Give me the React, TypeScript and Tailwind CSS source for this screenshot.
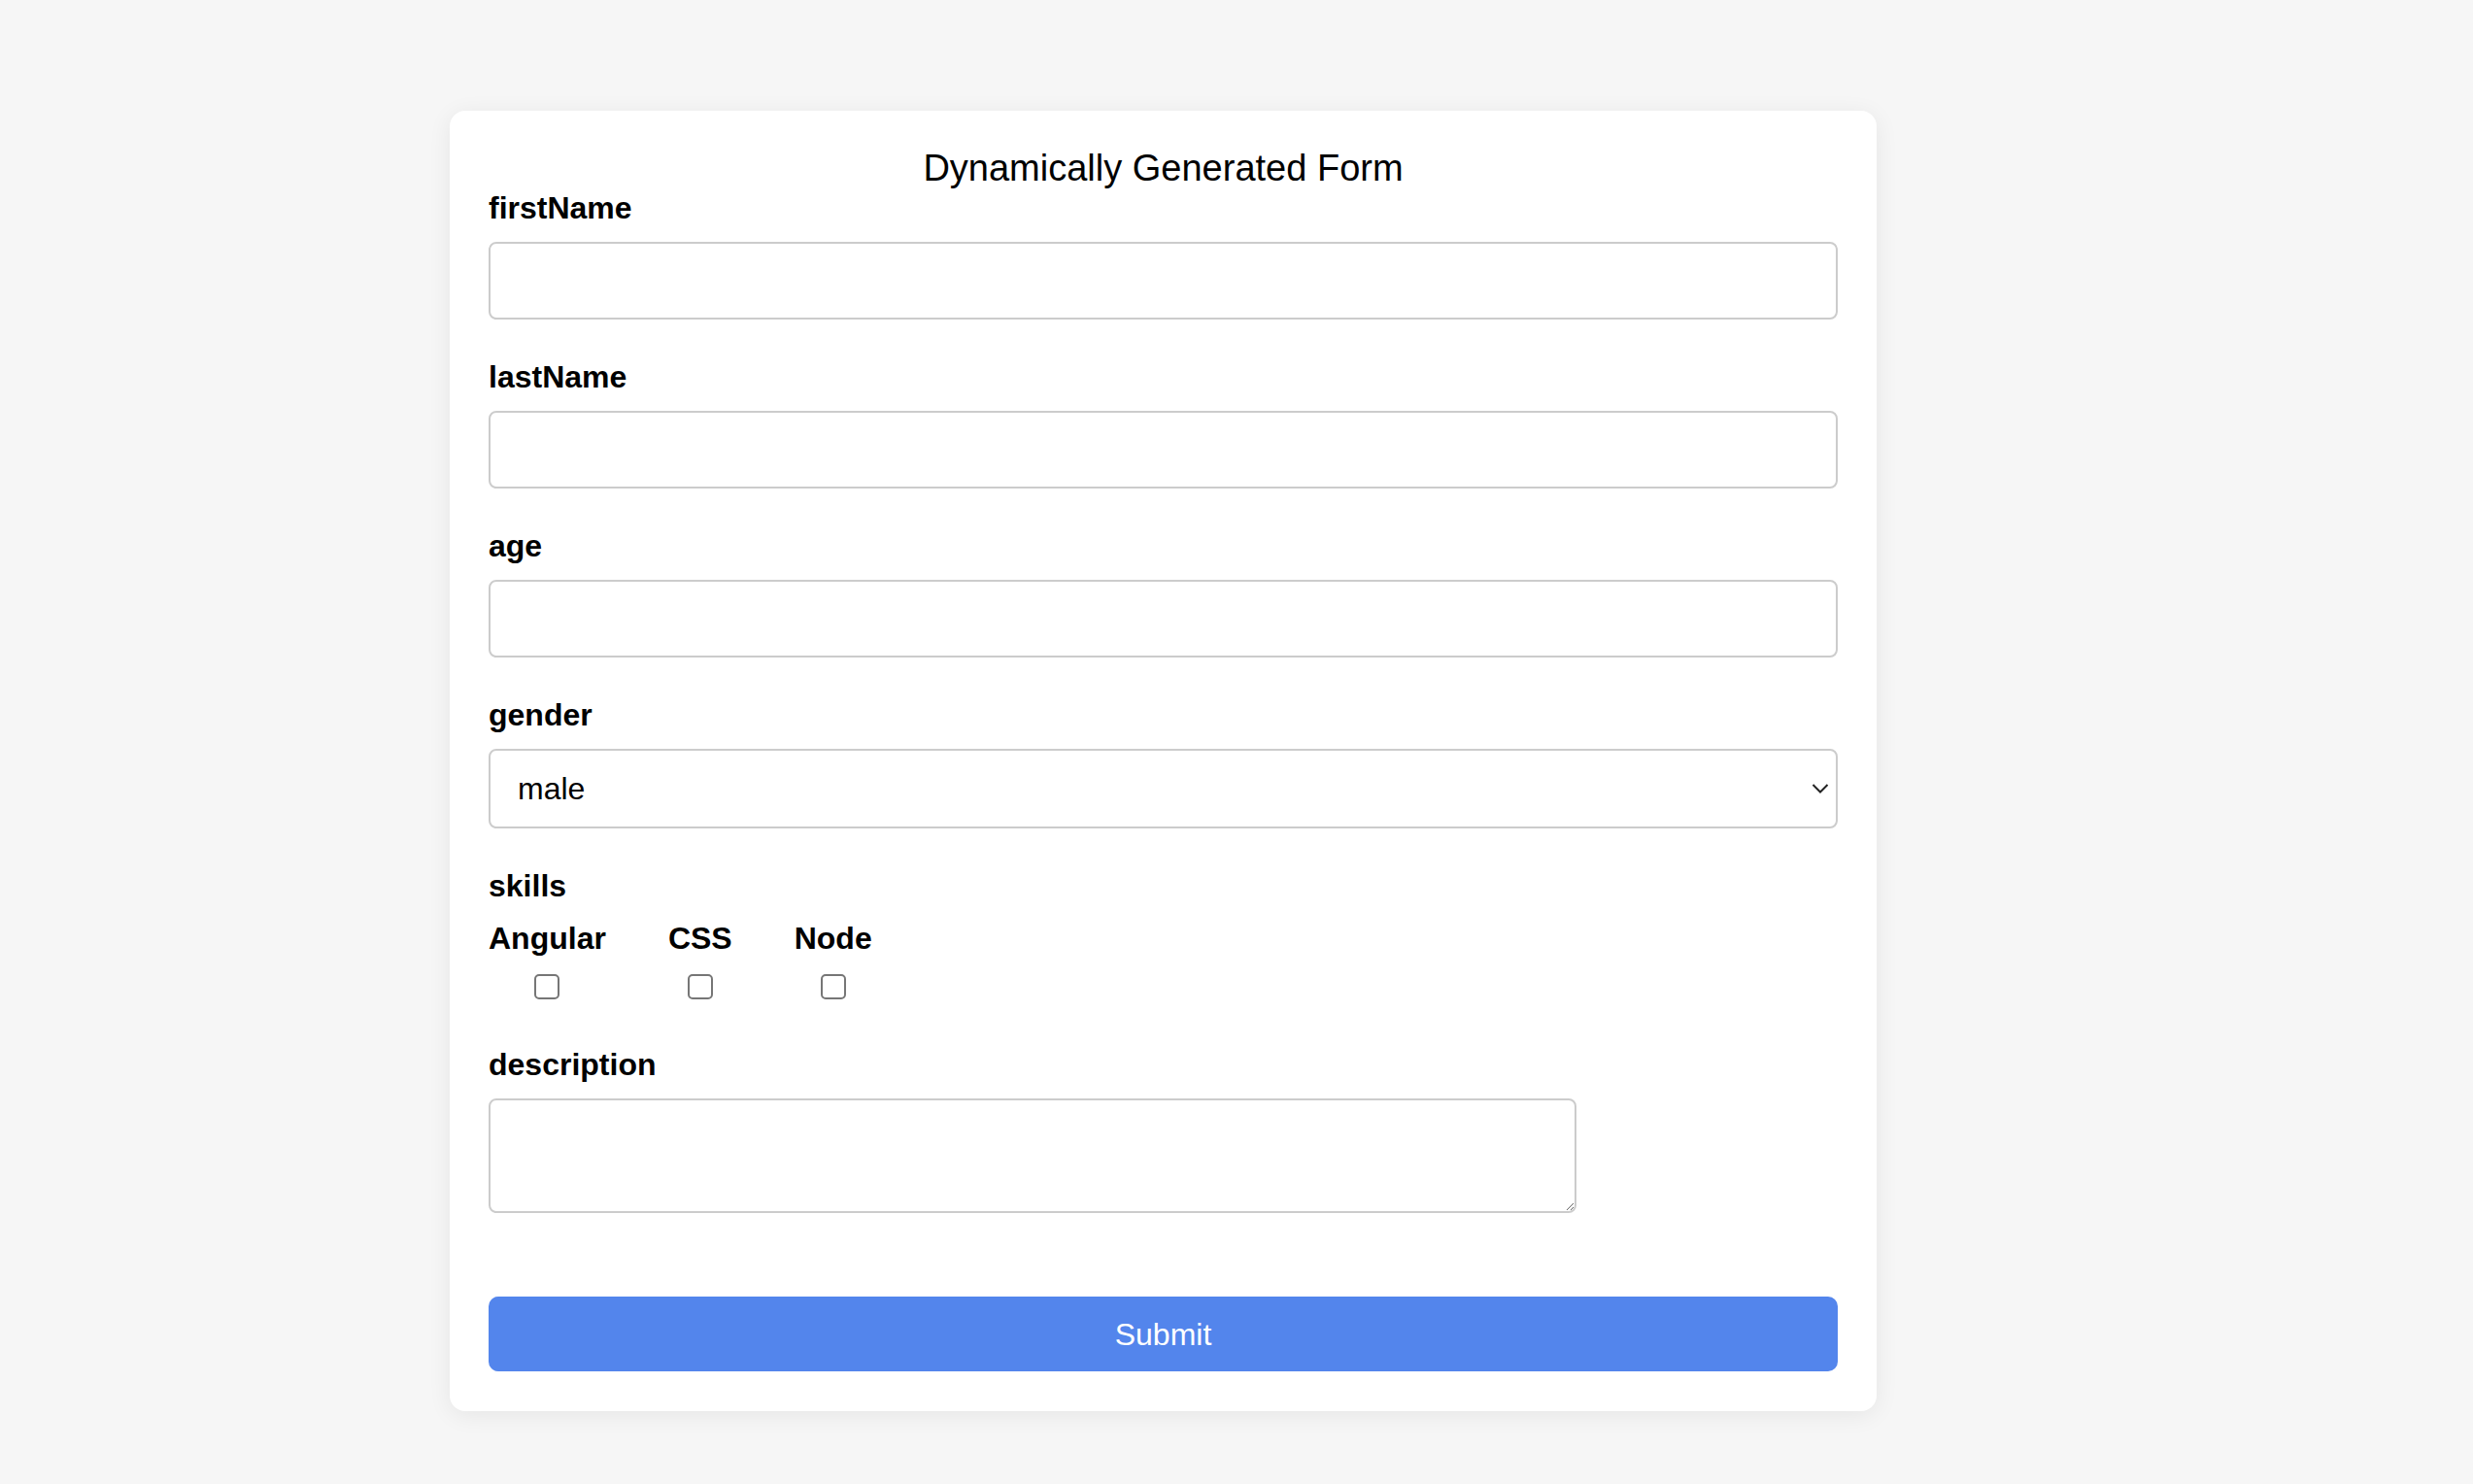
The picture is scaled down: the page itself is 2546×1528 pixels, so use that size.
import React from "react";

const font = { fontFamily: '"Liberation Sans", Arial, Helvetica, sans-serif' };

function Label({ children }: { children: React.ReactNode }) {
  return <label className="block text-[32px] leading-[38px] font-bold text-black mb-[16px]">{children}</label>;
}

export default function App() {
  return (
    <div className="min-h-screen bg-[#f6f6f6] pt-[114px] pb-[76px]" style={font}>
      <form
        className="ml-[463px] w-[1469px] bg-white rounded-[16px] shadow-[0_4px_24px_rgba(0,0,0,0.07)] px-[40px] pt-[38px] pb-[41px]"
        onSubmit={(e) => e.preventDefault()}
      >
        <div className="text-center text-[38px] leading-[43px] text-black">Dynamically Generated Form</div>

        {["firstName", "lastName", "age"].map((n) => (
          <div key={n} className="mb-[40px]">
            <Label>{n}</Label>
            <input
              type="text"
              className="block w-full h-[80px] border-2 border-[#cccccc] rounded-[8px] px-[20px] text-[32px] outline-none bg-white"
            />
          </div>
        ))}

        <div className="mb-[40px]">
          <Label>gender</Label>
          <div className="relative">
            <select
              defaultValue="male"
              className="block w-full h-[82px] appearance-none border-2 border-[#cccccc] rounded-[8px] pl-[28px] pr-[40px] text-[32px] text-black bg-white outline-none"
              style={font}
            >
              <option value="male">male</option>
              <option value="female">female</option>
            </select>
            <svg
              className="absolute right-[9px] top-1/2 -translate-y-1/2 pointer-events-none"
              width="18"
              height="11"
              viewBox="0 0 18 11"
              fill="none"
            >
              <path d="M1.5 1.5 L9 9 L16.5 1.5" stroke="#222" strokeWidth="2" />
            </svg>
          </div>
        </div>

        <div className="mb-[48px]">
          <div className="text-[32px] leading-[38px] font-bold text-black mb-[16px]">skills</div>
          <div className="flex gap-[64px]">
            {["Angular", "CSS", "Node"].map((s) => (
              <div key={s} className="flex flex-col items-center">
                <span className="text-[32px] leading-[38px] font-bold text-black">{s}</span>
                <input
                  type="checkbox"
                  className="appearance-none mt-[18px] w-[26px] h-[26px] border-2 border-[#767676] rounded-[5px] bg-white"
                />
              </div>
            ))}
          </div>
        </div>

        <div className="mb-[86px]">
          <Label>description</Label>
          <textarea className="block w-[1120px] h-[118px] border-2 border-[#cccccc] rounded-[8px] p-[10px] text-[32px] outline-none" />
        </div>

        <button
          type="submit"
          className="block w-full h-[77px] bg-[#5385ec] text-white text-[32px] rounded-[10px]"
          style={font}
        >
          Submit
        </button>
      </form>
    </div>
  );
}
